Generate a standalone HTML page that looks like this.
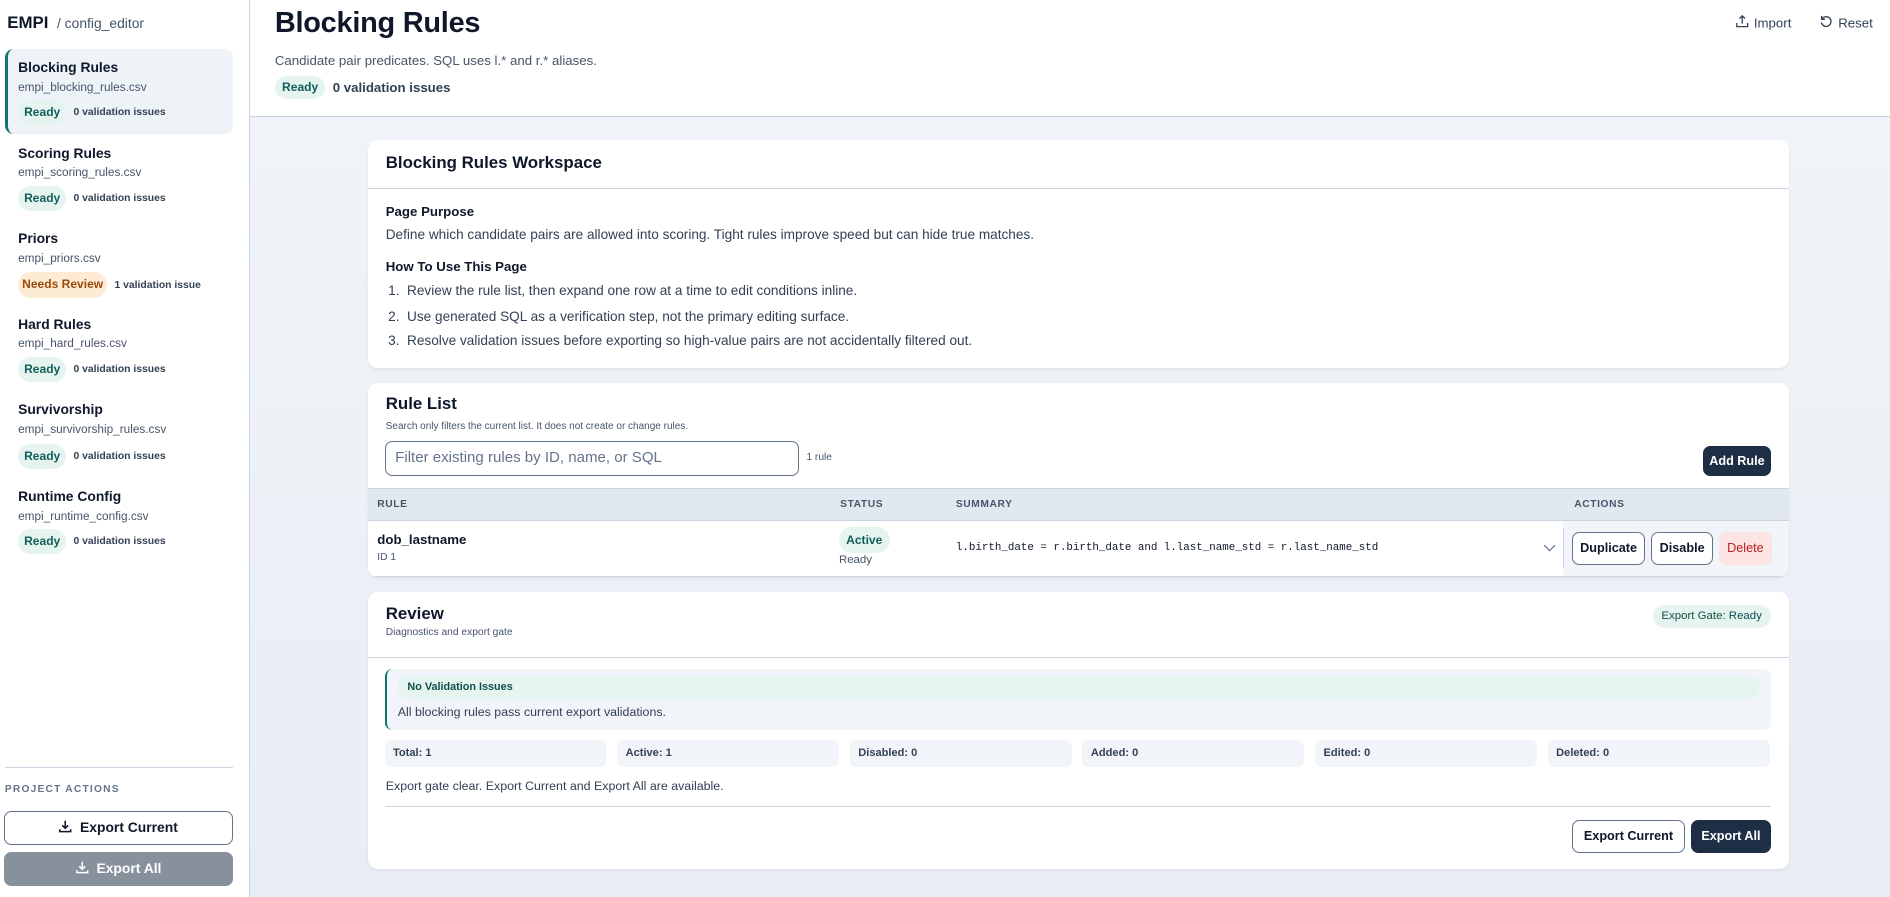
<!DOCTYPE html>
<html><head><meta charset="utf-8">
<style>
*{box-sizing:border-box;margin:0;padding:0}
html,body{width:1890px;height:897px;overflow:hidden;background:#e9eef4}
body{font-family:"Liberation Sans",sans-serif;color:#0f172a}
#w{zoom:1.2054;width:1568px;height:744px;position:relative;background:linear-gradient(#f1f5f9,#e8edf4)}
.a{position:absolute;white-space:nowrap}
.side{position:absolute;left:0;top:0;width:207px;height:744px;background:#fff;border-right:1px solid #cbd5e1}
.hdr{position:absolute;left:207px;top:0;right:0;height:97px;background:#fff;border-bottom:1px solid #cbd5e1}
.pill{position:absolute;border-radius:11px;background:#e6f4f0;color:#115e59;font-size:10px;font-weight:bold;text-align:center}
.t13{font-size:11.5px;font-weight:bold}
.f{font-size:9.8px;color:#475569}
.v{font-size:8.6px;font-weight:bold;color:#334155}
.card{position:absolute;left:305px;width:1179px;background:#fff;border-radius:8px;box-shadow:0 1px 2px rgba(15,23,42,.06)}
.btn{position:absolute;border:1px solid #64748b;border-radius:6px;background:#fff;font-size:11px;font-weight:bold;text-align:center;color:#0f172a}
.stat{position:absolute;top:614px;width:184px;height:22px;background:#f1f5f9;border-radius:5px;font-size:9.2px;font-weight:bold;color:#334155;padding:6px 7px}
.txt{font-size:11.3px;color:#334155}
</style></head><body><div id="w">
<div class="side">
 <div class="a" style="left:6px;top:11px;font-size:14px;font-weight:bold">EMPI <span style="font-size:11.5px;font-weight:normal;color:#475569">&nbsp;/ config_editor</span></div>
 <div style="position:absolute;left:4px;top:41px;width:189px;height:70px;background:#eef3f8;border-radius:7px;border-left:3px solid #0f766e"></div>
 <div class="a t13" style="left:15px;top:49px">Blocking Rules</div>
 <div class="a f" style="left:15px;top:66px">empi_blocking_rules.csv</div>
 <div class="pill" style="left:15px;top:83px;width:40px;height:21px;line-height:21px">Ready</div>
 <div class="a v" style="left:61px;top:89px">0 validation issues</div>

 <div class="a t13" style="left:15px;top:120px">Scoring Rules</div>
 <div class="a f" style="left:15px;top:137px">empi_scoring_rules.csv</div>
 <div class="pill" style="left:15px;top:154px;width:40px;height:21px;line-height:21px">Ready</div>
 <div class="a v" style="left:61px;top:160px">0 validation issues</div>

 <div class="a t13" style="left:15px;top:191px">Priors</div>
 <div class="a f" style="left:15px;top:208px">empi_priors.csv</div>
 <div class="pill" style="left:15px;top:226px;width:74px;height:21px;line-height:21px;background:#fdebd3;color:#9a4a0a">Needs Review</div>
 <div class="a v" style="left:95px;top:232px">1 validation issue</div>

 <div class="a t13" style="left:15px;top:262px">Hard Rules</div>
 <div class="a f" style="left:15px;top:279px">empi_hard_rules.csv</div>
 <div class="pill" style="left:15px;top:296px;width:40px;height:21px;line-height:21px">Ready</div>
 <div class="a v" style="left:61px;top:302px">0 validation issues</div>

 <div class="a t13" style="left:15px;top:333px">Survivorship</div>
 <div class="a f" style="left:15px;top:350px">empi_survivorship_rules.csv</div>
 <div class="pill" style="left:15px;top:368px;width:40px;height:21px;line-height:21px">Ready</div>
 <div class="a v" style="left:61px;top:374px">0 validation issues</div>

 <div class="a t13" style="left:15px;top:405px">Runtime Config</div>
 <div class="a f" style="left:15px;top:422px">empi_runtime_config.csv</div>
 <div class="pill" style="left:15px;top:439px;width:40px;height:21px;line-height:21px">Ready</div>
 <div class="a v" style="left:61px;top:445px">0 validation issues</div>

 <div style="position:absolute;left:4px;top:636px;width:189px;border-top:1px solid #cbd5e1"></div>
 <div class="a" style="left:4px;top:650px;font-size:8.5px;font-weight:bold;letter-spacing:1px;color:#64748b">PROJECT ACTIONS</div>
 <div class="btn" style="left:3px;top:673px;width:190px;height:28px;line-height:26px;font-size:11.5px">
  <svg width="12" height="12" viewBox="0 0 12 12" style="vertical-align:-1px;margin-right:6px" fill="none" stroke="#0f172a" stroke-width="1.3"><path d="M6 1.5v6M3.5 5.2L6 7.7l2.5-2.5M1.5 8.5v2h9v-2"/></svg>Export Current</div>
 <div class="btn" style="left:3px;top:707px;width:190px;height:28px;line-height:28px;font-size:11.5px;background:#87919c;border:none;color:#fff">
  <svg width="12" height="12" viewBox="0 0 12 12" style="vertical-align:-1px;margin-right:6px" fill="none" stroke="#fff" stroke-width="1.3"><path d="M6 1.5v6M3.5 5.2L6 7.7l2.5-2.5M1.5 8.5v2h9v-2"/></svg>Export All</div>
</div>

<div class="hdr">
 <div class="a" style="left:21px;top:6px;font-size:24px;font-weight:bold;letter-spacing:-.2px">Blocking Rules</div>
 <div class="a" style="left:21px;top:44px;font-size:11px;color:#475569">Candidate pair predicates. SQL uses l.* and r.* aliases.</div>
 <div class="pill" style="left:21px;top:63px;width:42px;height:19px;line-height:19px">Ready</div>
 <div class="a" style="left:69px;top:66px;font-size:11px;font-weight:bold;color:#334155">0 validation issues</div>
 <div class="a" style="left:1232px;top:12px;font-size:11px;color:#334155">
  <svg width="12" height="12" viewBox="0 0 12 12" style="vertical-align:-1px;margin-right:4px" fill="none" stroke="#334155" stroke-width="1.1"><path d="M6 8V1.5M3.7 3.8L6 1.5l2.3 2.3M1.5 7.5v3h9v-3"/></svg>Import</div>
 <div class="a" style="left:1302px;top:12px;font-size:11px;color:#334155">
  <svg width="12" height="12" viewBox="0 0 12 12" style="vertical-align:-1px;margin-right:4px" fill="none" stroke="#334155" stroke-width="1.1"><path d="M2.5 4.2A4 4 0 1 1 2 7M2.2 1.6v2.8h2.8"/></svg>Reset</div>
</div>

<div class="card" style="top:116px;height:189px">
 <div class="a" style="left:15px;top:11px;font-size:14px;font-weight:bold">Blocking Rules Workspace</div>
 <div style="position:absolute;left:0;right:0;top:40px;border-top:1px solid #cbd5e1"></div>
 <div class="a" style="left:15px;top:53px;font-size:11px;font-weight:bold">Page Purpose</div>
 <div class="a txt" style="left:15px;top:72px">Define which candidate pairs are allowed into scoring. Tight rules improve speed but can hide true matches.</div>
 <div class="a" style="left:15px;top:99px;font-size:11px;font-weight:bold">How To Use This Page</div>
 <div class="a txt" style="left:17px;top:119px">1.&nbsp; Review the rule list, then expand one row at a time to edit conditions inline.</div>
 <div class="a txt" style="left:17px;top:140px">2.&nbsp; Use generated SQL as a verification step, not the primary editing surface.</div>
 <div class="a txt" style="left:17px;top:160px">3.&nbsp; Resolve validation issues before exporting so high-value pairs are not accidentally filtered out.</div>
</div>

<div class="card" style="top:318px;height:161px;overflow:hidden">
 <div class="a" style="left:15px;top:9px;font-size:14px;font-weight:bold">Rule List</div>
 <div class="a" style="left:15px;top:31px;font-size:8.3px;color:#475569">Search only filters the current list. It does not create or change rules.</div>
 <div style="position:absolute;left:14px;top:48px;width:344px;height:29px;border:1px solid #64748b;border-radius:6px;font-size:12.5px;color:#64748b;padding:6px 8px">Filter existing rules by ID, name, or SQL</div>
 <div class="a" style="left:364px;top:57px;font-size:8.5px;color:#475569">1 rule</div>
 <div class="btn" style="left:1108px;top:52px;width:56px;height:25px;line-height:25px;background:#1e2f45;border:none;color:#fff;font-size:10.5px">Add Rule</div>
 <div style="position:absolute;left:0;right:0;top:87px;height:27px;background:#e2e8f0;border-top:1px solid #cbd5e1;border-bottom:1px solid #cbd5e1"></div>
 <div class="a" style="left:8px;top:96px;font-size:8.5px;font-weight:bold;letter-spacing:.5px;color:#475569">RULE</div>
 <div class="a" style="left:392px;top:96px;font-size:8.5px;font-weight:bold;letter-spacing:.5px;color:#475569">STATUS</div>
 <div class="a" style="left:488px;top:96px;font-size:8.5px;font-weight:bold;letter-spacing:.5px;color:#475569">SUMMARY</div>
 <div class="a" style="left:1001px;top:96px;font-size:8.5px;font-weight:bold;letter-spacing:.5px;color:#475569">ACTIONS</div>
 <div style="position:absolute;left:992px;right:0;top:114px;height:46px;background:#f1f5f9"></div>
 <div style="position:absolute;left:992px;top:120px;height:33px;border-left:1px solid #cbd5e1"></div>
 <div style="position:absolute;left:0;right:0;top:160px;border-top:1px solid #cbd5e1"></div>
 <div class="a" style="left:8px;top:123px;font-size:11px;font-weight:bold">dob_lastname</div>
 <div class="a" style="left:8px;top:140px;font-size:8.5px;color:#475569">ID 1</div>
 <div class="pill" style="left:391px;top:119px;width:42px;height:22px;line-height:22px">Active</div>
 <div class="a" style="left:391px;top:142px;font-size:9.5px;color:#475569">Ready</div>
 <div class="a" style="left:488px;top:132px;font-family:'Liberation Mono',monospace;font-size:9px;color:#0f172a">l.birth_date = r.birth_date and l.last_name_std = r.last_name_std</div>
 <svg class="a" style="left:975px;top:133px" width="11" height="7" viewBox="0 0 11 7" fill="none" stroke="#64748b" stroke-width="1"><path d="M1 1l4.5 4.5L10 1"/></svg>
 <div class="btn" style="left:999px;top:123px;width:61px;height:28px;line-height:26px;font-size:10.5px">Duplicate</div>
 <div class="btn" style="left:1065px;top:123px;width:51px;height:28px;line-height:26px;font-size:10.5px">Disable</div>
 <div class="btn" style="left:1121px;top:123px;width:44px;height:28px;line-height:28px;font-size:10.5px;border:none;background:#fde4e4;color:#b91c1c;font-weight:normal">Delete</div>
</div>

<div class="card" style="top:491px;height:230px">
 <div class="a" style="left:15px;top:10px;font-size:14px;font-weight:bold">Review</div>
 <div class="a" style="left:15px;top:29px;font-size:8.5px;color:#475569">Diagnostics and export gate</div>
 <div class="pill" style="left:1066px;top:11px;width:98px;height:19px;line-height:19px;font-weight:normal;font-size:9.5px;color:#0f4f4a">Export Gate: Ready</div>
 <div style="position:absolute;left:0;right:0;top:54px;border-top:1px solid #cbd5e1"></div>
 <div style="position:absolute;left:14px;top:64px;width:1150px;height:51px;background:#f1f5f9;border-radius:6px;border-left:2px solid #0f766e"></div>
 <div style="position:absolute;left:25px;top:70px;width:1130px;height:19px;background:#e6f4f0;border-radius:9px;font-size:9px;font-weight:bold;color:#0f4f4a;padding:4px 8px">No Validation Issues</div>
 <div class="a" style="left:25px;top:94px;font-size:10.3px;color:#334155">All blocking rules pass current export validations.</div>
 <div class="a" style="left:15px;top:155px;font-size:10.3px;color:#334155">Export gate clear. Export Current and Export All are available.</div>
 <div style="position:absolute;left:14px;width:1150px;top:178px;border-top:1px solid #cbd5e1"></div>
 <div class="btn" style="left:999px;top:189px;width:94px;height:28px;line-height:26px;font-size:10.5px">Export Current</div>
 <div class="btn" style="left:1098px;top:189px;width:66px;height:28px;line-height:28px;font-size:10.5px;background:#1e2f45;border:none;color:#fff">Export All</div>
</div>
<div class="stat" style="left:319px">Total: 1</div>
<div class="stat" style="left:512px">Active: 1</div>
<div class="stat" style="left:705px">Disabled: 0</div>
<div class="stat" style="left:898px">Added: 0</div>
<div class="stat" style="left:1091px">Edited: 0</div>
<div class="stat" style="left:1284px">Deleted: 0</div>
</div></body></html>
